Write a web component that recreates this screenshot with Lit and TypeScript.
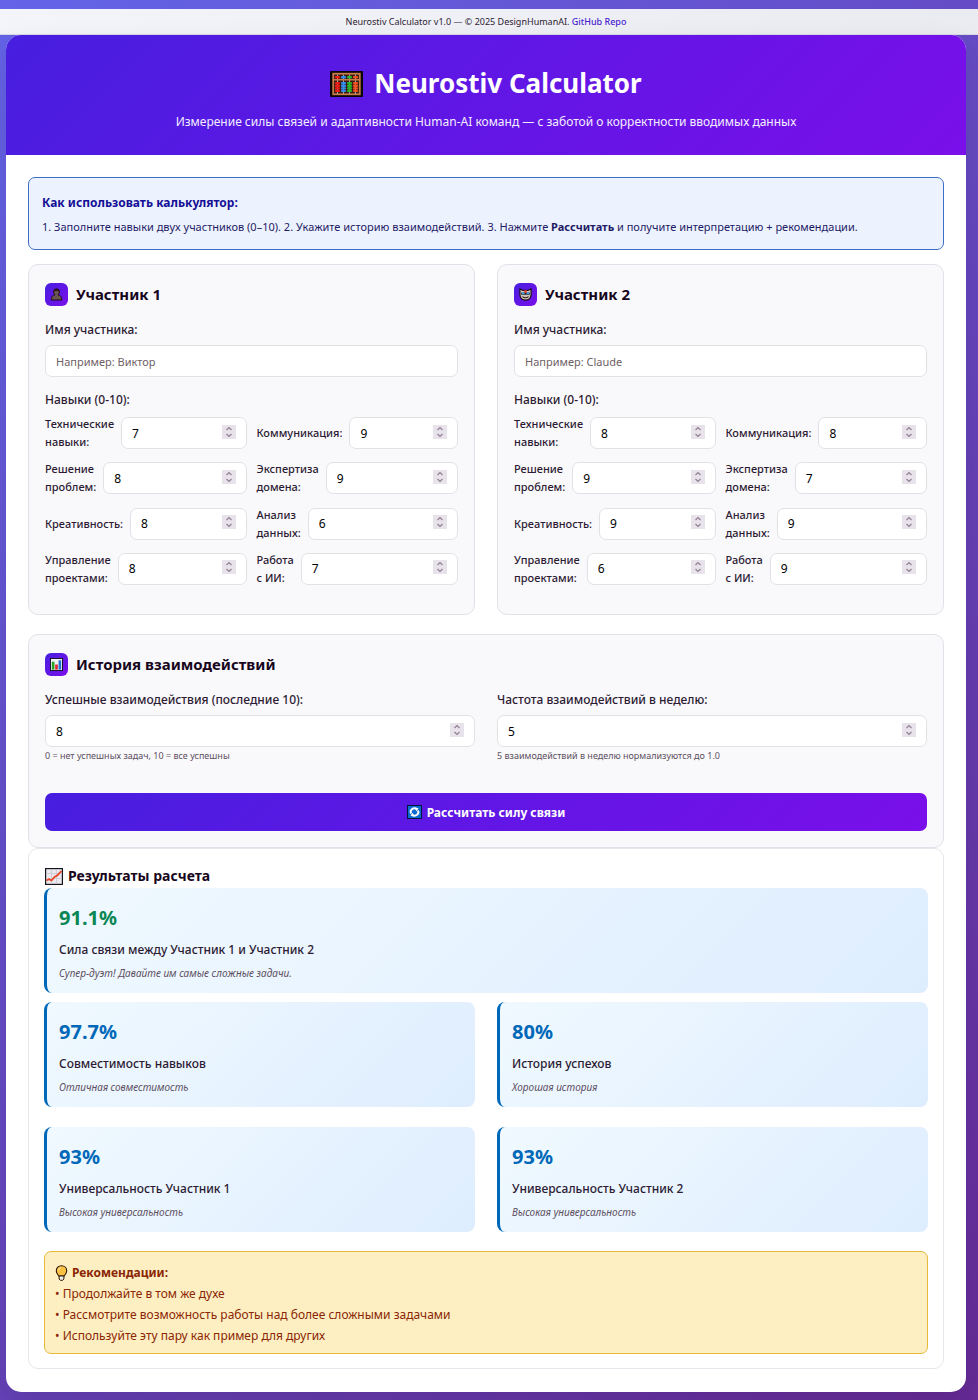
import { LitElement, html, css, svg, TemplateResult } from "lit";
import { customElement, state } from "lit/decorators.js";

interface Skill {
  key: string;
  label: string;
  values: [number, number];
}

interface Metric {
  value: string;
  label: string;
  note: string;
}

const SKILLS: Skill[] = [
  { key: "tech", label: "Технические навыки:", values: [7, 8] },
  { key: "comm", label: "Коммуникация:", values: [9, 8] },
  { key: "problem", label: "Решение проблем:", values: [8, 9] },
  { key: "domain", label: "Экспертиза домена:", values: [9, 7] },
  { key: "creative", label: "Креативность:", values: [8, 9] },
  { key: "data", label: "Анализ данных:", values: [6, 9] },
  { key: "manage", label: "Управление проектами:", values: [8, 6] },
  { key: "ai", label: "Работа с ИИ:", values: [7, 9] },
];

const METRICS: Metric[] = [
  { value: "97.7%", label: "Совместимость навыков", note: "Отличная совместимость" },
  { value: "80%", label: "История успехов", note: "Хорошая история" },
  { value: "93%", label: "Универсальность Участник 1", note: "Высокая универсальность" },
  { value: "93%", label: "Универсальность Участник 2", note: "Высокая универсальность" },
];

const TIPS = [
  "Продолжайте в том же духе",
  "Рассмотрите возможность работы над более сложными задачами",
  "Используйте эту пару как пример для других",
];

const BEADS = [
  { x: 7, color: "#ee1c12" },
  { x: 13, color: "#2f8df0" },
  { x: 19, color: "#25b52a" },
  { x: 25, color: "#f4511e" },
];

const abacusIcon = html`<svg class="abacus" viewBox="0 0 33 26" aria-hidden="true">
  <rect width="33" height="26" rx="1" fill="#0b0503" />
  <rect x="3.200" y="2.700" width="26.600" height="20.600" fill="#3a1a12" stroke="#c47c48" stroke-width="1.8" />
  ${BEADS.map(
    (b) => svg`
      <path d="M${b.x + 0.5} 3.500v19.500" stroke="#a9a0a0" stroke-width="1" />
      <rect x=${b.x - 2} y="5" width="5" height="2.400" rx="1" fill=${b.color} />
      ${[11, 13.6, 16.2, 18.8].map(
        (y) => svg`<rect x=${b.x - 2} y=${y} width="5" height="2.300" rx="1" fill=${b.color} />`
      )}`
  )}
  <path d="M3 8.800h27" stroke="#c47c48" stroke-width="1.5" />
</svg>`;

const personIcon = html`<svg viewBox="0 0 14 14" aria-hidden="true">
  <path
    d="M7 1C4.700 1 3.700 2.600 3.900 4.400c.1 1.500.8 2.500 1.500 3.100C3.200 7.900 1.500 8.700 1.300 12.900h11.400c-.2-4.200-1.900-5-4.100-5.400.7-.6 1.400-1.600 1.500-3.100C10.300 2.600 9.300 1 7 1z"
    fill="#6b5551" stroke="#170b0c" stroke-width="1" />
  <path d="M4 4.300C4.500 2.900 6 3.300 7 3.200s2.500-.2 3 1.100C10.400 2 9 .9 7 .9S3.600 2 4 4.300z" fill="#2a1616" />
</svg>`;

const maskIcon = html`<svg viewBox="0 0 14 14" aria-hidden="true">
  <path
    d="M1 1l3.400 1.600h5.200L13 1v6.500C12.600 11.200 10 13 7 13S1.400 11.200 1 7.500z"
    fill="#cfc3b4" stroke="#150c10" stroke-width="1.2" />
  <path d="M2.300 5h9.400v2.200H2.300z" fill="#171720" />
  <path d="M3 4.600h2.900v2H3zM8.100 4.600H11v2H8.100z" fill="#3ba5ea" />
  <path d="M5.700 2.300h2.600v3.200H5.700z" fill="#e0402c" />
  <path d="M3.700 9.300c2 1.400 4.600 1.400 6.600 0" fill="none" stroke="#2c1b1a" stroke-width="1.1" />
</svg>`;

const barsIcon = html`<svg viewBox="0 0 14 14" aria-hidden="true">
  <rect x=".5" y=".5" width="13" height="13" fill="#f0f0f5" stroke="#10101c" />
  <rect x="2" y="4" width="2.800" height="8.500" fill="#29a324" />
  <rect x="5.600" y="7" width="2.800" height="5.500" fill="#df2430" />
  <rect x="9.200" y="2.500" width="2.800" height="10" fill="#1f74d6" />
</svg>`;

const refreshIcon = html`<svg class="refresh" viewBox="0 0 15 14" aria-hidden="true">
  <rect x=".5" y=".5" width="14" height="13" fill="#0a6bd0" stroke="#05123a" />
  <path d="M4.200 8.500A3.500 3.300 0 0 1 9.500 4.300M10.800 5.500A3.500 3.300 0 0 1 5.500 9.700" fill="none" stroke="#fff" stroke-width="1.900" />
  <path d="M8.300 2.200L11.600 3.400 9.300 6.300zM6.700 11.800L3.400 10.600 5.700 7.700z" fill="#fff" />
</svg>`;

const chartIcon = html`<svg class="chart" viewBox="0 0 18 17" aria-hidden="true">
  <rect x=".6" y=".6" width="16.800" height="15.800" fill="#ebe9ee" stroke="#15151d" stroke-width="1.2" />
  <path d="M6.500 1.500v14M11.500 1.500v14M1.500 5.500h15M1.500 10.500h15" stroke="#c9c6cf" stroke-width=".8" />
  <path d="M1.500 12.500l2.500-1.200 2.500 1.200 3.500-4 2-.8L16.500 3" fill="none" stroke="#e8401c" stroke-width="1.700" />
</svg>`;

const bulbIcon = html`<svg class="bulb" viewBox="0 0 12 16" aria-hidden="true">
  <path
    d="M6 .7C3 .7.8 2.900.8 5.700c0 2.500 1.600 3.600 2.400 5.300h5.600c.8-1.700 2.400-2.800 2.400-5.300C11.200 2.900 9 .7 6 .7z"
    fill="#fcc043" stroke="#2a1808" stroke-width="1.100" />
  <path d="M3.600 11h4.800v3L7.200 15.300H4.800L3.600 14z" fill="#f2ece2" stroke="#2a1808" stroke-width="1" />
  <path d="M3 5.200C3.200 3.700 4.200 2.900 5.500 2.700" fill="none" stroke="#ffe9a8" stroke-width="1.100" />
</svg>`;

@customElement("app-root")
export class AppRoot extends LitElement {
  @state() private names = ["", ""];

  static styles = css`
    :host {
      display: block;
      box-sizing: border-box;
      min-height: 100vh;
      padding: 9px 0 8px;
      background: linear-gradient(135deg, #6464e8 0%, #662a96 100%);
      font-family: "Noto Sans", "Open Sans", sans-serif;
      font-size: 12px;
      line-height: 21px;
      color: #2d1b33;
    }
    *,
    *::before,
    *::after {
      box-sizing: border-box;
    }
    h1,
    h2,
    h3,
    p,
    ul {
      margin: 0;
      padding: 0;
    }
    svg {
      display: block;
      flex: none;
    }
    .topbar {
      height: 26px;
      padding-right: 6px;
      background: linear-gradient(135deg, #f3f5fa, #eaebf1);
      border-bottom: 1px solid #d9d9e6;
      text-align: center;
      font-size: 9px;
      line-height: 26px;
    }
    .topbar a {
      color: #4a1fd0;
      font-weight: 500;
      text-decoration: none;
    }
    .page {
      margin: 0 12px 0 6px;
      background: #fff;
      border-radius: 15px;
      overflow: hidden;
      box-shadow: 0 12px 30px rgba(0, 0, 0, 0.1);
    }
    .hero {
      padding: 26px 22px 23px;
      background: linear-gradient(135deg, #471ee0, #7a0fea);
      color: #fff;
      text-align: center;
    }
    .hero h1 {
      display: flex;
      align-items: center;
      justify-content: center;
      gap: 11px;
      margin-bottom: 5px;
      font-size: 26px;
      line-height: 45px;
      font-weight: 700;
    }
    .abacus {
      width: 33px;
      height: 26px;
    }
    .hero p {
      font-size: 12px;
      color: #f4eefe;
    }
    .content {
      padding: 22px 22px 23px;
    }
    .info {
      padding: 14px 13px 13px;
      margin-bottom: 14px;
      border: 1px solid #3f6fc4;
      border-radius: 7px;
      background: #ecf3fe;
      color: #1f1a66;
      font-size: 11px;
      line-height: 18px;
    }
    .info h2 {
      margin-bottom: 5px;
      font-size: 12px;
      line-height: 21px;
      color: #150f96;
    }
    .two {
      display: grid;
      grid-template-columns: minmax(0, 1fr) minmax(0, 1fr);
      column-gap: 22px;
    }
    .card {
      padding: 16px;
      border: 1px solid #e2e1e9;
      border-radius: 10px;
      background: #f9f9fc;
    }
    .people {
      margin-bottom: 19px;
    }
    .card-title {
      display: flex;
      align-items: center;
      gap: 8px;
      margin-bottom: 11px;
      font-size: 15px;
      line-height: 27px;
      font-weight: 700;
      color: #17061c;
    }
    .badge {
      display: grid;
      place-items: center;
      width: 23px;
      height: 23px;
      border-radius: 6px;
      background: linear-gradient(135deg, #471ee0, #7a0fea);
    }
    .badge svg {
      width: 13px;
      height: 13px;
    }
    .field {
      margin-bottom: 12px;
    }
    .label {
      display: block;
      margin-bottom: 5px;
      font-weight: 500;
      font-size: 12px;
      line-height: 21px;
    }
    input {
      display: block;
      width: 100%;
      min-width: 0;
      height: 32px;
      padding: 0 10px;
      border: 1px solid #e2e1e6;
      border-radius: 7px;
      background: #fff;
      font-family: inherit;
      font-size: 12px;
      line-height: 20px;
      color: #000;
    }
    input[type="text"] {
      font-size: 11px;
    }
    input::placeholder {
      color: #6f5f66;
    }
    input::-webkit-inner-spin-button {
      -webkit-appearance: none;
      opacity: 1;
      width: 14px;
      height: 14px;
      background: #e8e3ea
        url("data:image/svg+xml,%3Csvg xmlns='http://www.w3.org/2000/svg' viewBox='0 0 14 14'%3E%3Cpath d='M4.500 5L7 2.500 9.500 5M4.500 9L7 11.500 9.500 9' fill='none' stroke='%23917f92' stroke-width='1.200'/%3E%3C/svg%3E")
        center / 14px 14px no-repeat;
    }
    .skills {
      display: grid;
      grid-template-columns: minmax(0, 1fr) minmax(0, 1fr);
      align-content: space-between;
      column-gap: 10px;
      min-height: 172px;
      margin-bottom: 11px;
    }
    .skill {
      display: flex;
      align-items: center;
      gap: 7px;
      height: 36px;
    }
    .skill label {
      width: min-content;
      flex: none;
      font-size: 11px;
      line-height: 18px;
      font-weight: 500;
    }
    .skill input {
      flex: 1;
    }
    .hint {
      display: block;
      margin: 1px 0 0;
      font-size: 9px;
      line-height: 16px;
      color: #5d4f60;
    }
    .run {
      display: flex;
      align-items: center;
      justify-content: center;
      gap: 5px;
      width: 100%;
      height: 38px;
      margin-top: 29px;
      border: 0;
      border-radius: 7px;
      background: linear-gradient(135deg, #471ee0, #7a0fea);
      color: #fff;
      font-family: inherit;
      font-size: 12px;
      font-weight: 700;
    }
    .refresh {
      width: 15px;
      height: 14px;
    }
    .results {
      padding: 15px 15px 14px;
      border: 1px solid #e6e6ec;
      border-radius: 10px;
    }
    .results-title {
      display: flex;
      align-items: center;
      gap: 5px;
      padding-left: 1px;
      font-size: 14px;
      line-height: 24px;
      font-weight: 700;
      color: #17061c;
    }
    .chart {
      width: 18px;
      height: 17px;
    }
    .metrics {
      row-gap: 20px;
      margin: 9px 0 19px;
    }
    .metric {
      padding: 12px;
      border-left: 3px solid #0068b8;
      border-radius: 8px;
      background: linear-gradient(135deg, #f0f9ff, #deedfe);
    }
    .metric-value {
      margin-bottom: 3px;
      font-size: 20px;
      line-height: 36px;
      font-weight: 700;
      color: #0068b8;
    }
    .metric-value.great {
      color: #0a8754;
    }
    .metric-label {
      margin-bottom: 5px;
      font-weight: 500;
    }
    .metric-note {
      font-size: 10px;
      line-height: 16px;
      font-style: italic;
      color: #5d4f60;
    }
    .tips {
      padding: 10px 10px 7px;
      border: 1px solid #e5b93a;
      border-radius: 7px;
      background: #feefc3;
      color: #8a2604;
    }
    .tips h3 {
      display: flex;
      align-items: center;
      gap: 4px;
      font-size: 12px;
      font-weight: 700;
    }
    .bulb {
      width: 13px;
      height: 16px;
    }
    .tips ul {
      list-style: none;
    }
    .tips li::before {
      content: "• ";
    }
  `;

  private rename(index: number, event: Event) {
    const next = [...this.names];
    next[index] = (event.target as HTMLInputElement).value;
    this.names = next;
  }

  private participant(index: number, icon: TemplateResult, example: string) {
    const id = `p${index + 1}`;
    return html`<section class="card">
      <h2 class="card-title"><span class="badge">${icon}</span>Участник ${index + 1}</h2>
      <div class="field">
        <label class="label" for="${id}-name">Имя участника:</label>
        <input
          id="${id}-name"
          type="text"
          placeholder="Например: ${example}"
          .value=${this.names[index]}
          @input=${(e: Event) => this.rename(index, e)}
        />
      </div>
      <p class="label">Навыки (0-10):</p>
      <div class="skills">
        ${SKILLS.map(
          (s) => html`<div class="skill">
            <label for="${id}-${s.key}">${s.label}</label>
            <input id="${id}-${s.key}" type="number" min="0" max="10" .value=${String(s.values[index])} />
          </div>`
        )}
      </div>
    </section>`;
  }

  private metric(m: Metric, great = false) {
    return html`<article class="metric">
      <p class="metric-value ${great ? "great" : ""}">${m.value}</p>
      <p class="metric-label">${m.label}</p>
      <p class="metric-note">${m.note}</p>
    </article>`;
  }

  render() {
    return html`
      <div class="topbar">
        Neurostiv Calculator v1.0 — © 2025 DesignHumanAI. <a href="#repo">GitHub Repo</a>
      </div>
      <main class="page">
        <header class="hero">
          <h1>${abacusIcon}<span>Neurostiv Calculator</span></h1>
          <p>Измерение силы связей и адаптивности Human-AI команд — с заботой о корректности вводимых данных</p>
        </header>
        <div class="content">
          <section class="info">
            <h2>Как использовать калькулятор:</h2>
            <p>
              1. Заполните навыки двух участников (0–10). 2. Укажите историю взаимодействий. 3. Нажмите
              <b>Рассчитать</b> и получите интерпретацию + рекомендации.
            </p>
          </section>
          <div class="two people">
            ${this.participant(0, personIcon, "Виктор")} ${this.participant(1, maskIcon, "Claude")}
          </div>
          <section class="card">
            <h2 class="card-title"><span class="badge">${barsIcon}</span>История взаимодействий</h2>
            <div class="two">
              <div>
                <label class="label" for="success">Успешные взаимодействия (последние 10):</label>
                <input id="success" type="number" min="0" max="10" .value=${"8"} />
                <small class="hint">0 = нет успешных задач, 10 = все успешны</small>
              </div>
              <div>
                <label class="label" for="frequency">Частота взаимодействий в неделю:</label>
                <input id="frequency" type="number" min="0" .value=${"5"} />
                <small class="hint">5 взаимодействий в неделю нормализуются до 1.0</small>
              </div>
            </div>
            <button class="run" type="button">${refreshIcon}<span>Рассчитать силу связи</span></button>
          </section>
          <section class="results">
            <h2 class="results-title">${chartIcon}<span>Результаты расчета</span></h2>
            ${this.metric(
              {
                value: "91.1%",
                label: "Сила связи между Участник 1 и Участник 2",
                note: "Супер-дуэт! Давайте им самые сложные задачи.",
              },
              true
            )}
            <div class="two metrics">${METRICS.map((m) => this.metric(m))}</div>
            <div class="tips">
              <h3>${bulbIcon}<span>Рекомендации:</span></h3>
              <ul>
                ${TIPS.map((t) => html`<li>${t}</li>`)}
              </ul>
            </div>
          </section>
        </div>
      </main>
    `;
  }
}
